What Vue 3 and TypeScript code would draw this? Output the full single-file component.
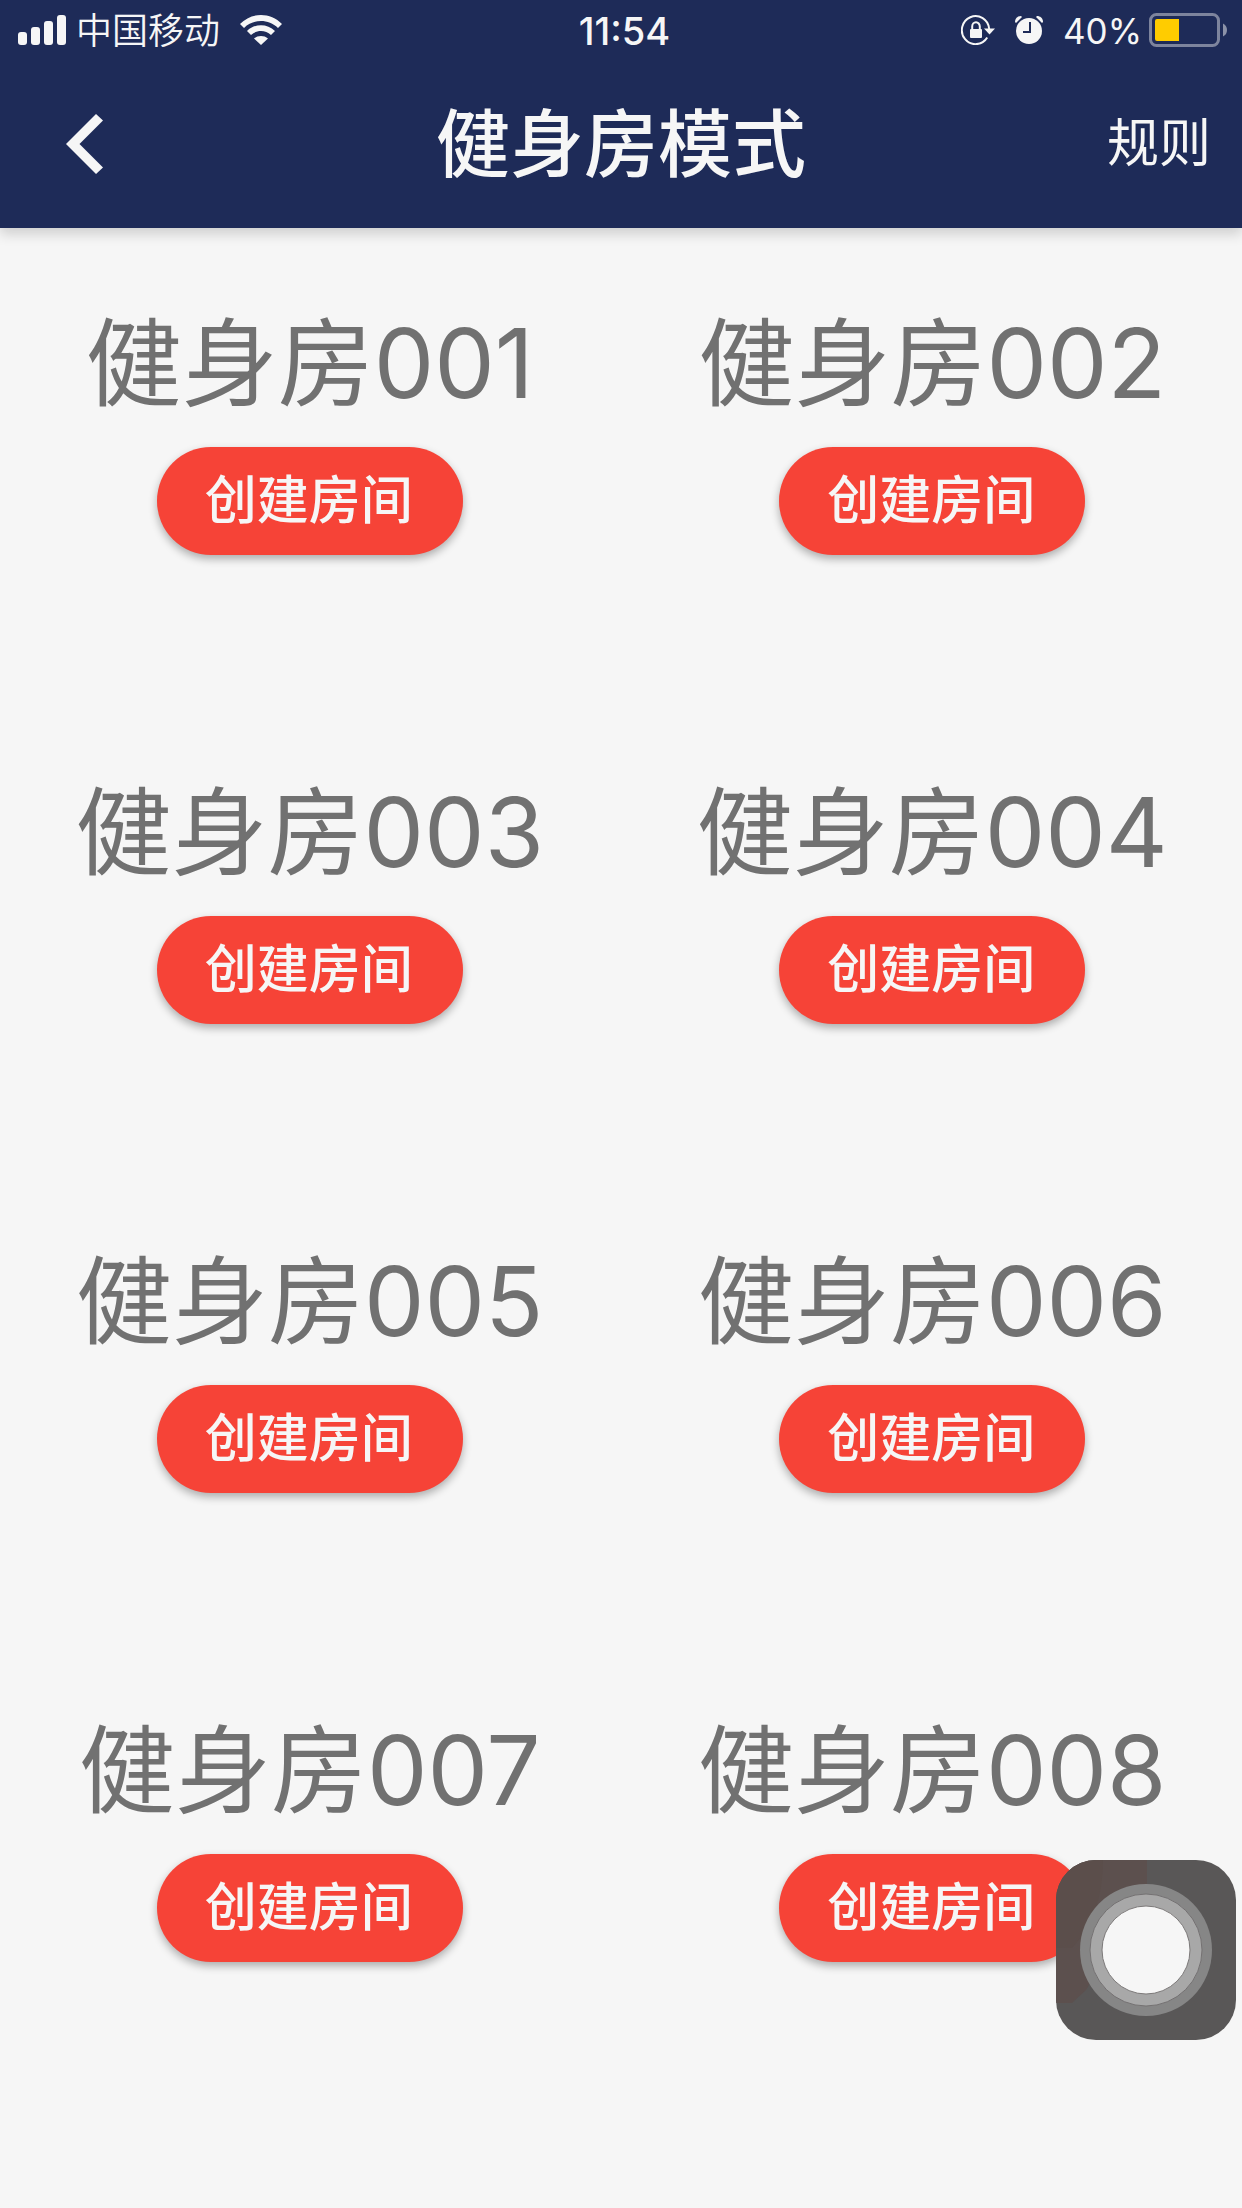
<script setup lang="ts">
interface Room {
  id: number
  name: string
}

const rooms: Room[] = Array.from({ length: 8 }, (_, i) => ({
  id: i + 1,
  name: `健身房${String(i + 1).padStart(3, '0')}`,
}))
</script>

<template>
  <div class="page">
    <header class="app-header">
      <div class="status-bar">
        <div class="status-left">
          <svg class="signal" width="48" height="30" viewBox="0 0 48 30" aria-hidden="true">
            <rect x="0" y="17" width="9" height="13" rx="3" />
            <rect x="13" y="12" width="9" height="18" rx="3" />
            <rect x="26" y="6" width="9" height="24" rx="3" />
            <rect x="39" y="0" width="9" height="30" rx="3" />
          </svg>
          <span class="carrier">中国移动</span>
          <svg class="wifi" width="42" height="30" viewBox="0 0 42 30" aria-hidden="true">
            <path d="M0 9C11.500-3 30.500-3 42 9L38 13C28.500 3.800 13.500 3.800 4 13Z" />
            <path d="M7 16C14.800 8.300 27.200 8.300 35 16L31 20C25.400 14.800 16.600 14.800 11 20Z" />
            <path d="M14 23.500C18 20.200 24 20.200 28 23.500L21 30Z" />
          </svg>
        </div>
        <span class="time">11:54</span>
        <div class="status-right">
          <svg width="34" height="30" viewBox="0 0 34 30" aria-hidden="true">
            <path class="line" d="M28.200 14A13.700 14 0 1 0 26.200 22.500" />
            <path d="M23 13.500H34L28.500 19.500Z" />
            <rect x="9" y="14" width="12" height="9" rx="1" />
            <path class="line" d="M11.200 15V11.500a3.800 4.200 0 0 1 7.600 0V15" />
          </svg>
          <svg class="alarm" width="28" height="30" viewBox="0 0 28 30" aria-hidden="true">
            <circle cx="14" cy="16" r="13" />
            <path d="M0 7C0 3 3 1 6 1L7 2L1 8Z" />
            <path d="M28 7C28 3 25 1 22 1L21 2L27 8Z" />
            <path class="hands" d="M15 7V17H8" />
          </svg>
          <span class="percent">40%</span>
          <svg width="78" height="34" viewBox="0 0 78 34" aria-hidden="true">
            <rect class="battery-frame" x="1.500" y="1.500" width="68" height="31" rx="6" />
            <path class="battery-level" d="M8 6H30V28H8Q6 28 6 26V8Q6 6 8 6Z" />
            <path class="battery-cap" d="M74 10.500Q78 12.500 78 17T74 23.500Z" />
          </svg>
        </div>
      </div>
      <nav class="nav-bar">
        <button class="back" type="button" aria-label="返回">
          <svg width="38" height="60" viewBox="0 0 38 60" aria-hidden="true">
            <path d="M30 0L37 6.500L13.500 30L37 53.500L30 60L0 30Z" />
          </svg>
        </button>
        <h1>健身房模式</h1>
        <button class="rules" type="button">规则</button>
      </nav>
    </header>

    <main class="rooms">
      <section v-for="room in rooms" :key="room.id" class="room">
        <h2>{{ room.name }}</h2>
        <button class="create" type="button">创建房间</button>
      </section>
    </main>

    <button class="assist" type="button" aria-label="辅助触控">
      <svg width="180" height="180" viewBox="0 0 180 180" aria-hidden="true">
        <path class="tint-outer" d="M0 0H91V30L30 130L16 143H0Z" />
        <path class="tint-inner" d="M0 0H47Q47 55 16 88H0Z" />
        <circle cx="90" cy="90" r="66" fill="#868686" />
        <circle cx="90" cy="90" r="56" fill="#a8a8a8" stroke="#747172" />
        <circle cx="90" cy="90" r="44" fill="#f6f6f6" stroke="#7c7979" />
      </svg>
    </button>
  </div>
</template>

<style>
body {
  margin: 0;
  background: #f6f6f6;
}
</style>

<style scoped>
.page {
  min-height: 100vh;
  background: #f6f6f6;
  font-family: Inter, "Noto Sans CJK SC", sans-serif;
}

button {
  padding: 0;
  border: 0;
  background: none;
  color: inherit;
  font: inherit;
  cursor: pointer;
}

svg {
  display: block;
  flex: none;
  fill: currentColor;
}

.app-header {
  position: relative;
  background: #1e2b58;
  color: #f6f6f6;
  box-shadow: 0 6px 12px rgba(0, 0, 0, 0.16);
}

.status-bar {
  display: grid;
  grid-template-columns: 1fr auto 1fr;
  align-items: center;
  height: 60px;
  padding: 0 15px 0 18px;
  font-size: 36px;
  line-height: 56px;
}

.status-bar span {
  padding-top: 2px;
}

.status-left,
.status-right {
  display: flex;
  align-items: center;
}

.status-right {
  justify-content: flex-end;
}

.carrier {
  margin: 0 20px 0 10px;
  font-weight: 350;
}

.time {
  padding-left: 4px;
  font-size: 38px;
  font-weight: 500;
}

.alarm {
  margin: 0 20px;
}

.percent {
  margin-right: 7px;
  font-size: 35px;
}

.line {
  fill: none;
  stroke: currentColor;
  stroke-width: 2;
}

.hands {
  fill: none;
  stroke: #1e2b58;
  stroke-width: 2;
}

.battery-frame {
  fill: none;
  stroke: #7d849d;
  stroke-width: 3;
}

.battery-cap {
  fill: #8c92a8;
}

.battery-level {
  fill: #ffcc00;
}

.nav-bar {
  display: grid;
  grid-template-columns: 1fr auto 1fr;
  align-items: center;
  height: 168px;
  padding: 0 31px;
}

.back {
  justify-self: start;
  padding: 20px 35px;
}

h1 {
  margin: 0;
  font-size: 74px;
  font-weight: 500;
  line-height: 100px;
}

.rules {
  justify-self: end;
  font-size: 52px;
  line-height: 72px;
}

.rooms {
  display: grid;
  grid-template-columns: 1fr 1fr;
  column-gap: 3px;
}

.room {
  display: flex;
  flex-direction: column;
  align-items: center;
  padding: 75px 0 142px;
}

h2 {
  margin: 0 0 24px;
  color: #717171;
  font-size: 96px;
  font-weight: 400;
  line-height: 120px;
  white-space: nowrap;
}

.create {
  height: 108px;
  padding: 0 50px 0 48px;
  border-radius: 54px;
  background: #f64337;
  color: #f6f6f6;
  font-size: 52px;
  font-weight: 500;
  line-height: 108px;
  box-shadow: 0 4px 8px rgba(0, 0, 0, 0.3);
}

.assist {
  position: fixed;
  right: 6px;
  bottom: 168px;
  overflow: hidden;
  border-radius: 40px;
  background: #595757;
}

.tint-outer {
  fill: #5c504e;
}

.tint-inner {
  fill: #5b4e4b;
}
</style>
